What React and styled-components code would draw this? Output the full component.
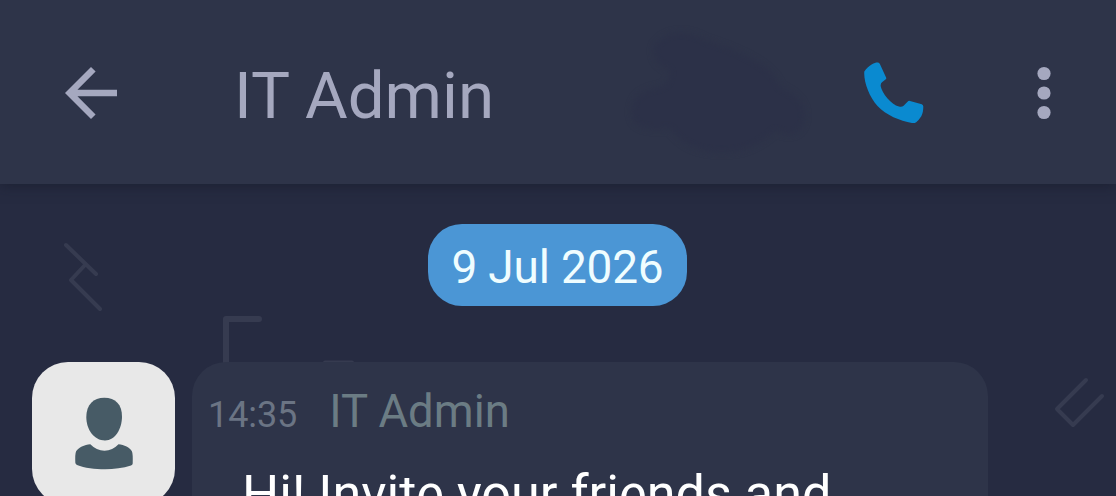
import React from "react";
import styled, { createGlobalStyle } from "styled-components";

const GlobalStyle = createGlobalStyle`
  * {
    box-sizing: border-box;
  }
  body {
    margin: 0;
    background: #262b41;
    font-family: Roboto, "Liberation Sans", sans-serif;
  }
`;

const BackIcon = () => (
  <svg width="78" height="78" viewBox="0 0 24 24" fill="currentColor">
    <path d="M20 11H7.83l5.59-5.59L12 4l-8 8 8 8 1.41-1.41L7.83 13H20v-2z" />
  </svg>
);

const MoreIcon = () => (
  <svg width="78" height="78" viewBox="0 0 24 24" fill="currentColor">
    <circle cx="12" cy="6" r="2.03" />
    <circle cx="12" cy="12" r="2.03" />
    <circle cx="12" cy="18" r="2.03" />
  </svg>
);

const PhoneIcon = () => (
  <svg width="60" height="62" viewBox="0 0 60 62" fill="currentColor">
    <path d="M0.3 9.5C2 6.5 5 4 8 2.2C10 1 12.500 0.300 14 0.500Q15.300 0.800 16 2.300L22.200 15.700Q22.500 16.500 21.800 17.200L18 20.300Q16.400 21.500 16.700 24.200C18 31 27 42.500 35 44.600Q38 45.300 39.600 43.700L43.300 40Q44.500 38.600 46 38.900L57.800 42.300Q59.300 42.900 59.300 44.600C59.300 48 58.800 51.800 57.300 54.300Q55 58 52.200 60.200Q50.500 61.300 48 61C36 59 22 53 13.500 44C5 34.500-0.500 19 0.300 9.500Z" />
  </svg>
);

const PersonIcon = () => (
  <svg width="60" height="73" viewBox="0 0 60 73" fill="currentColor">
    <path d="M30.300 0.700C41.500 0.700 48 7.500 48 19.500C48 32 41 43.500 31 43.500C20 43.500 12.300 32.500 12.300 20C12.300 7.500 19.500 0.700 30.300 0.700Z" />
    <path d="M16.300 47.300Q22.500 53.700 30.500 53.700Q38.500 53.700 44.500 47.300C50 48 56 50.500 58 54.500Q59 57 58.700 66.500Q58.600 68 57 68.600C49 71.300 40 72.200 31 72.200C21 72.200 10.500 71 3 68Q1.400 67.400 1.300 65.500Q1 57 2 54.500C4.500 50.500 10.500 48 16.300 47.300Z" />
  </svg>
);

const Screen = styled.div`
  width: 1116px;
  height: 496px;
  overflow: hidden;
  position: relative;
  display: flex;
  flex-direction: column;
`;

const Header = styled.header`
  flex: 0 0 184px;
  display: flex;
  align-items: flex-start;
  padding: 54px 33px 0 52px;
  background: #2e3449;
  color: #a5a8bf;
  box-shadow: 0 2px 12px rgba(20, 24, 38, 0.5);
  position: relative;
`;

const IconButton = styled.button`
  display: flex;
  padding: 0;
  border: 0;
  background: none;
  color: ${({ $color }) => $color || "inherit"};
  margin: ${({ $margin }) => $margin || 0};
`;

const Title = styled.h1`
  flex: 1;
  margin: 3px 0 0 104px;
  font-size: 65.5px;
  font-weight: 400;
  line-height: 77px;
  white-space: nowrap;
`;

const Smudge = styled.svg`
  position: absolute;
  left: 620px;
  top: 20px;
  filter: blur(3px);
`;

const Chat = styled.main`
  flex: 1;
  min-height: 0;
  display: flex;
  flex-direction: column;
  align-items: center;
  padding-top: 40px;
`;

const Doodles = styled.svg`
  position: absolute;
  inset: 0;
  fill: none;
  stroke: #363b50;
  stroke-linecap: round;
  stroke-linejoin: round;
`;

const DateChip = styled.div`
  position: relative;
  left: -0.5px;
  width: 259px;
  height: 82px;
  flex: none;
  border-radius: 34px;
  background: #4b96d5;
  color: #effdff;
  font-size: 46px;
  letter-spacing: -0.2px;
  line-height: 86px;
  text-align: center;
  white-space: nowrap;
`;

const MessageRow = styled.div`
  position: relative;
  align-self: stretch;
  display: flex;
  gap: 17px;
  margin-top: 56px;
  padding-left: 32px;
`;

const Avatar = styled.div`
  width: 143px;
  height: 143px;
  display: flex;
  justify-content: center;
  align-items: center;
  border-radius: 36px;
  background: #e8e8e8;
  color: #475b66;
`;

const Bubble = styled.div`
  width: 796px;
  height: 220px;
  padding: 23px 16px;
  border-radius: 34px;
  background: #2e3449;
`;

const Meta = styled.div`
  display: flex;
  align-items: baseline;
  gap: 32px;
  line-height: 54px;
  white-space: nowrap;
`;

const Time = styled.time`
  font-size: 36px;
  letter-spacing: -0.1px;
  color: #6b7484;
`;

const Sender = styled.span`
  font-size: 45.5px;
  color: #6b7c84;
`;

const Message = styled.p`
  margin: 23px 0 0 34px;
  font-size: 52.2px;
  line-height: 60px;
  color: #fff;
  white-space: nowrap;
`;

const App = () => (
  <>
    <GlobalStyle />
    <Screen>
      <Doodles width="1116" height="496">
        <path d="M66 245L96 274M85 265L71 280L100 309" strokeWidth="4" />
        <path d="M226 380V319H259" strokeWidth="6" />
        <path d="M325 362.500H352" strokeWidth="4" />
        <path d="M1086 380L1057 409L1073 425L1102 396" strokeWidth="4" />
      </Doodles>
      <Header>
        <Smudge width="200" height="145" fill="#2c3148">
          <path d="M35 25Q55 3 85 20Q150 40 160 67Q188 80 184 100Q178 122 155 110Q130 135 95 132Q65 130 50 108Q15 113 12 95Q10 72 40 67Q50 65 50 50Q30 42 35 25Z" />
        </Smudge>
        <IconButton aria-label="Back">
          <BackIcon />
        </IconButton>
        <Title>IT Admin</Title>
        <IconButton aria-label="Call" $color="#0a8ad0" $margin="8px 81px 0 0">
          <PhoneIcon />
        </IconButton>
        <IconButton aria-label="More options">
          <MoreIcon />
        </IconButton>
      </Header>
      <Chat>
        <DateChip>9 Jul 2026</DateChip>
        <MessageRow>
          <Avatar>
            <PersonIcon />
          </Avatar>
          <Bubble>
            <Meta>
              <Time>14:35</Time>
              <Sender>IT Admin</Sender>
            </Meta>
            <Message>Hi! Invite your friends and</Message>
          </Bubble>
        </MessageRow>
      </Chat>
    </Screen>
  </>
);

export default App;
